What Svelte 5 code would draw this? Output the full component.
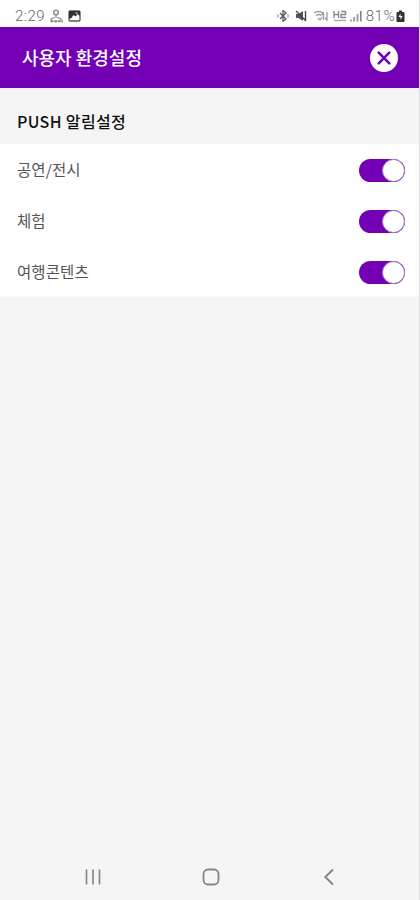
<script lang="ts">
	let settings = $state([
		{ id: 'show', label: '공연/전시', on: true },
		{ id: 'activity', label: '체험', on: true },
		{ id: 'travel', label: '여행콘텐츠', on: true }
	]);
</script>

<div class="screen">
	<div class="status-bar">
		<div class="status-left">
			<span class="time">2:29</span>
			<svg class="person" width="15" height="14" viewBox="0 0 15 14" fill="none" stroke="#888">
				<circle cx="7" cy="3.5" r="2.4" stroke-width="1.4" />
				<path d="M7 6v3M5.5 8.5 2 10v1.5M8.5 8.500l3.500 1.500v1.500" stroke-width="1.200" />
				<path d="M1.500 12.300H14" stroke-dasharray="3 .6" stroke-width="2" />
			</svg>
			<svg class="picture" width="13" height="12" viewBox="0 0 13 12">
				<rect x="1" y="1" width="11" height="10" rx="1" fill="#fff" stroke="#555" stroke-width="1.3" />
				<path d="M1 1h11v5L9.500 4 7.500 6.500 5.500 5 3 8.500H1z" fill="#333" />
				<path d="M7.500 3h2" stroke="#ddd" />
			</svg>
		</div>
		<div class="status-right">
			<svg width="12" height="12" viewBox="0 0 12 12" fill="none" stroke="#555" stroke-width="1.2">
				<path d="m3 3 6 6-3 2.5v-11L9 3 3 9" />
				<path d="M1 4.5v3M11 4.5v3" stroke="#888" />
			</svg>
			<svg class="mute" width="12" height="12" viewBox="0 0 12 12">
				<path d="M1 4h2.500L8 1v10L3.500 8H1z" fill="#555" />
				<path d="m1 1 10 10M10.500 1v9" fill="none" stroke="#444" stroke-width="1.4" />
			</svg>
			<svg class="wifi" width="16" height="12" viewBox="0 0 16 12" fill="none" stroke="#999" stroke-width="1.3">
				<path d="M1 3q5-3 9 0M3 5.500q3.500-2 5 0M5 8l2 2 2-3M10.500 10V3l-2 2M14 2v8l-2-2" />
			</svg>
			<svg class="lte" width="14" height="12" viewBox="0 0 14 12" fill="none" stroke="#888" stroke-width="1.4">
				<path d="M1 1v7M5.500 1v7M1 4.500h4.500M8 1.500h4.500v3H8v3h5" />
				<path d="M1 10.500h12" stroke="#aaa" />
			</svg>
			<svg class="signal" width="12" height="12" viewBox="0 0 12 12" fill="none" stroke="#888" stroke-width="1.8">
				<path d="M1 11.500V9.500M4.200 11.500V7M7.500 11.500V4" stroke="#999" />
				<path d="M10.800 11.500V1" />
			</svg>
			<span class="percent">81%</span>
			<svg class="battery" width="9" height="12" viewBox="0 0 9 12">
				<path d="M3 .5h3V2h1.500q1 0 1 1v8q0 1-1 1h-6q-1 0-1-1V3q0-1 1-1H3z" fill="#333" />
				<path d="M4.500 3.500 2.500 7h2v3l2-4h-2z" fill="#fff" />
			</svg>
		</div>
	</div>

	<header class="page-header">
		<h1>사용자 환경설정</h1>
		<button class="close" aria-label="닫기">
			<svg width="28" height="28" viewBox="0 0 28 28">
				<circle cx="14" cy="14" r="14" fill="#fff" />
				<path d="m8.7 8.7 10.6 10.6M19.3 8.7 8.7 19.3" stroke="#7300b5" stroke-width="2.6" stroke-linecap="round" />
			</svg>
		</button>
	</header>

	<main>
		<h2>PUSH 알림설정</h2>
		<ul>
			{#each settings as item (item.id)}
				<li>
					<span class="label">{item.label}</span>
					<button
						class="toggle"
						class:on={item.on}
						role="switch"
						aria-checked={item.on}
						aria-label={item.label}
						onclick={() => (item.on = !item.on)}
					>
						<span class="knob"></span>
					</button>
				</li>
			{/each}
		</ul>
	</main>

	<nav class="nav-bar">
		<svg width="18" height="18" viewBox="0 0 18 18" stroke="#8a8a8a" stroke-width="1.7">
			<path d="M2.500 1.500v15M9 1.500v15M15.500 1.500v15" />
		</svg>
		<svg width="18" height="18" viewBox="0 0 18 18" fill="none" stroke="#858585" stroke-width="1.8">
			<rect x="1.5" y="1.5" width="15" height="15" rx="4.5" />
		</svg>
		<svg width="18" height="18" viewBox="0 0 18 18" fill="none" stroke="#858585" stroke-width="1.9">
			<path d="M13 1.500 5.300 9l7.700 7.500" />
		</svg>
	</nav>
</div>

<style>
	:global(body) {
		margin: 0;
	}

	.screen {
		display: flex;
		flex-direction: column;
		box-sizing: border-box;
		height: 900px;
		border-right: 1px solid #dedede;
		background: #f5f5f5;
		font-family: 'Noto Sans CJK KR', 'Noto Sans', sans-serif;
	}

	.status-bar {
		display: flex;
		justify-content: space-between;
		align-items: center;
		box-sizing: border-box;
		height: 27px;
		padding: 5px 14px 0 15px;
		background: #fff;
		color: #666;
		font-family: Roboto, sans-serif;
		font-size: 15px;
		font-weight: 300;
	}

	.status-left,
	.status-right {
		display: flex;
		align-items: center;
	}

	.time {
		letter-spacing: 0.5px;
	}

	.person,
	.picture,
	.lte,
	.percent {
		margin-left: 4px;
	}

	.mute,
	.wifi {
		margin-left: 6px;
	}

	.signal {
		margin-left: 3px;
	}

	.percent {
		letter-spacing: 0.5px;
	}

	.battery {
		margin-left: 1px;
	}

	.page-header {
		display: flex;
		justify-content: space-between;
		align-items: center;
		height: 61px;
		padding: 0 21px 0 22px;
		background: #7300b5;
	}

	h1 {
		margin: 0;
		color: #fff;
		font-size: 18px;
		font-weight: 500;
		line-height: 27px;
	}

	button {
		padding: 0;
		border: 0;
		background: none;
		cursor: pointer;
	}

	.close {
		width: 28px;
		height: 28px;
	}

	.close svg {
		display: block;
	}

	h2 {
		box-sizing: border-box;
		height: 56px;
		margin: 0;
		padding: 21px 17px 0;
		color: #111;
		font-size: 16px;
		font-weight: 500;
		line-height: 24px;
		letter-spacing: 0.35px;
	}

	ul {
		margin: 0;
		padding: 0;
		background: #fff;
		list-style: none;
	}

	li {
		display: flex;
		justify-content: space-between;
		align-items: center;
		box-sizing: border-box;
		height: 51px;
		padding: 2px 14px 0 17px;
		border-bottom: 1px solid #fbfbfb;
	}

	.label {
		margin-top: -2px;
		color: #555;
		font-size: 15.5px;
		line-height: 24px;
		letter-spacing: 0.1px;
	}

	.toggle {
		display: flex;
		align-items: center;
		box-sizing: border-box;
		width: 46px;
		height: 23px;
		border-radius: 12px;
		background: #ccc;
	}

	.toggle.on {
		justify-content: flex-end;
		background: #7300b5;
	}

	.knob {
		box-sizing: border-box;
		width: 23px;
		height: 23px;
		border: 1px solid #a078b8;
		border-radius: 50%;
		background: #fff;
	}

	.nav-bar {
		display: flex;
		justify-content: space-between;
		margin-top: auto;
		padding: 0 81px 14px 84px;
	}
</style>
